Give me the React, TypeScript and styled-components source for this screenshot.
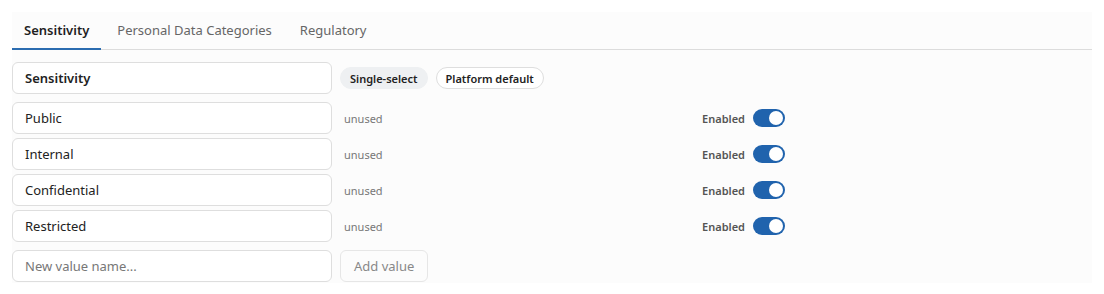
import React from "react";
import styled, { createGlobalStyle } from "styled-components";

const Global = createGlobalStyle`
  html, body { margin: 0; padding: 0; background: #ffffff; }
  body { font-family: "Noto Sans", "Open Sans", sans-serif; color: #222; }
  * { box-sizing: border-box; }
`;

const Page = styled.div`
  padding: 12px;
`;

const Panel = styled.div`
  background: #fcfcfc;
  min-height: 271px;
`;

const TabBar = styled.div`
  display: flex;
  gap: 4px;
  border-bottom: 1px solid #dcdcdc;
  height: 38px;
`;

const Tab = styled.div<{ $active?: boolean }>`
  padding: 0 12px;
  display: flex;
  align-items: center;
  font-size: 13px;
  font-weight: ${(p) => (p.$active ? 600 : 400)};
  color: ${(p) => (p.$active ? "#1f1f1f" : "#666")};
  border-bottom: 2px solid ${(p) => (p.$active ? "#2b6cb0" : "transparent")};
  margin-bottom: -1px;
`;

const Body = styled.div`
  padding-top: 12px;
  display: flex;
  flex-direction: column;
  width: 773px;
`;

const HeaderRow = styled.div`
  display: flex;
  align-items: center;
  gap: 8px;
  margin-bottom: 8px;
`;

const Field = styled.div<{ $bold?: boolean; $placeholder?: boolean }>`
  width: 320px;
  height: 32px;
  flex: none;
  background: #fff;
  border: 1px solid #dedede;
  border-radius: 6px;
  padding: 0 12px;
  display: flex;
  align-items: center;
  font-size: 13px;
  font-weight: ${(p) => (p.$bold ? 600 : 400)};
  color: ${(p) => (p.$placeholder ? "#777" : "#222")};
`;

const Chip = styled.span<{ $outlined?: boolean }>`
  height: 22px;
  padding: 0 9px;
  display: inline-flex;
  align-items: center;
  border-radius: 11px;
  font-size: 11px;
  font-weight: 600;
  color: #222;
  background: ${(p) => (p.$outlined ? "#fff" : "#eef0f2")};
  border: 1px solid ${(p) => (p.$outlined ? "#dedede" : "#eef0f2")};
`;

const ValueList = styled.div`
  display: flex;
  flex-direction: column;
  gap: 4px;
`;

const ValueRow = styled.div`
  display: flex;
  align-items: center;
`;

const Usage = styled.span`
  flex: 1;
  padding-left: 12px;
  font-size: 11px;
  color: #777;
`;

const ToggleWrap = styled.label`
  display: flex;
  align-items: center;
  gap: 8px;
  font-size: 11px;
  font-weight: 600;
  color: #555;
`;

const Switch = styled.span<{ $on: boolean }>`
  position: relative;
  width: 32px;
  height: 18px;
  border-radius: 9px;
  background: ${(p) => (p.$on ? "#2063ad" : "#ccc")};
  &::after {
    content: "";
    position: absolute;
    top: 2px;
    left: ${(p) => (p.$on ? "16px" : "2px")};
    width: 14px;
    height: 14px;
    border-radius: 50%;
    background: #fff;
  }
`;

const AddRow = styled.div`
  display: flex;
  align-items: center;
  gap: 8px;
  margin-top: 8px;
`;

const AddButton = styled.button`
  height: 32px;
  padding: 0 13px;
  border: 1px solid #e6e6e6;
  border-radius: 6px;
  background: #fcfcfc;
  color: #888;
  font-family: inherit;
  font-size: 13px;
`;

const values = ["Public", "Internal", "Confidential", "Restricted"];

export default function App() {
  return (
    <>
      <Global />
      <Page>
        <Panel>
          <TabBar>
            <Tab $active>Sensitivity</Tab>
            <Tab>Personal Data Categories</Tab>
            <Tab>Regulatory</Tab>
          </TabBar>
          <Body>
            <HeaderRow>
              <Field $bold>Sensitivity</Field>
              <Chip>Single-select</Chip>
              <Chip $outlined>Platform default</Chip>
            </HeaderRow>
            <ValueList>
              {values.map((v) => (
                <ValueRow key={v}>
                  <Field>{v}</Field>
                  <Usage>unused</Usage>
                  <ToggleWrap>
                    Enabled
                    <Switch $on />
                  </ToggleWrap>
                </ValueRow>
              ))}
            </ValueList>
            <AddRow>
              <Field $placeholder>New value name...</Field>
              <AddButton>Add value</AddButton>
            </AddRow>
          </Body>
        </Panel>
      </Page>
    </>
  );
}
